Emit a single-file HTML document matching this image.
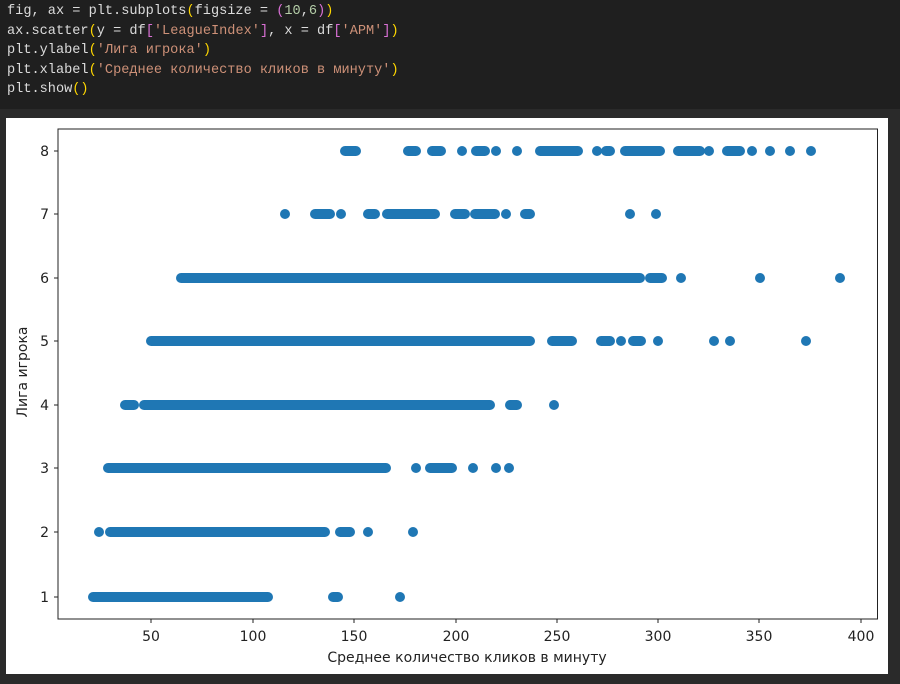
<!DOCTYPE html>
<html><head><style>
body{margin:0;width:900px;height:684px;background:#1f1f1f;overflow:hidden;font-family:"Liberation Mono",monospace}
.code{position:absolute;left:7px;top:2px;font-size:13.6px;line-height:19.5px;color:#dcdcdc;white-space:pre}
.y{color:#ffd700}.p{color:#da70d6}.s{color:#ce9178}.n{color:#b5cea8}
.out{position:absolute;left:0;top:109px;width:900px;height:575px;background:#2a2a2a}
svg{position:absolute;left:0;top:0}
</style></head><body>
<div class="code">fig, ax = plt.subplots<span class="y">(</span>figsize = <span class="p">(</span><span class="n">10</span>,<span class="n">6</span><span class="p">)</span><span class="y">)</span>
ax.scatter<span class="y">(</span>y = df<span class="p">[</span><span class="s">'LeagueIndex'</span><span class="p">]</span>, x = df<span class="p">[</span><span class="s">'APM'</span><span class="p">]</span><span class="y">)</span>
plt.ylabel<span class="y">(</span><span class="s">'Лига игрока'</span><span class="y">)</span>
plt.xlabel<span class="y">(</span><span class="s">'Среднее количество кликов в минуту'</span><span class="y">)</span>
plt.show<span class="y">()</span></div>
<div class="out"></div>
<svg width="900" height="684" xmlns="http://www.w3.org/2000/svg" font-family="'DejaVu Sans',sans-serif">
<rect x="6" y="118" width="882" height="556" fill="#fff"/>
<rect x="58" y="129" width="819.5" height="490" fill="none" stroke="#222" stroke-width="1"/>
<g stroke="#222" stroke-width="1">
<line x1="54" x2="58" y1="151" y2="151"/><line x1="54" x2="58" y1="214" y2="214"/><line x1="54" x2="58" y1="278" y2="278"/><line x1="54" x2="58" y1="341" y2="341"/><line x1="54" x2="58" y1="405" y2="405"/><line x1="54" x2="58" y1="468" y2="468"/><line x1="54" x2="58" y1="532" y2="532"/><line x1="54" x2="58" y1="597" y2="597"/>
<line y1="619" y2="623" x1="151" x2="151"/><line y1="619" y2="623" x1="253" x2="253"/><line y1="619" y2="623" x1="354" x2="354"/><line y1="619" y2="623" x1="456" x2="456"/><line y1="619" y2="623" x1="557" x2="557"/><line y1="619" y2="623" x1="658" x2="658"/><line y1="619" y2="623" x1="759" x2="759"/><line y1="619" y2="623" x1="861" x2="861"/>
</g>
<g font-size="14" fill="#222" text-anchor="end">
<text x="49" y="156">8</text><text x="49" y="219">7</text><text x="49" y="283">6</text><text x="49" y="346">5</text><text x="49" y="410">4</text><text x="49" y="473">3</text><text x="49" y="537">2</text><text x="49" y="602">1</text>
</g>
<g font-size="14" fill="#222" text-anchor="middle">
<text x="151" y="641">50</text><text x="253" y="641">100</text><text x="354" y="641">150</text><text x="456" y="641">200</text><text x="557" y="641">250</text><text x="658" y="641">300</text><text x="759" y="641">350</text><text x="861" y="641">400</text>
<text x="467" y="662">Среднее количество кликов в минуту</text>
<text transform="translate(27,372) rotate(-90)">Лига игрока</text>
</g>
<g stroke="#1f77b4" stroke-width="10" stroke-linecap="round">
<line x1="345" x2="356" y1="151" y2="151"/><line x1="408" x2="416" y1="151" y2="151"/><line x1="432" x2="441" y1="151" y2="151"/><line x1="462" x2="462" y1="151" y2="151"/><line x1="476" x2="485" y1="151" y2="151"/><line x1="496" x2="496" y1="151" y2="151"/><line x1="517" x2="517" y1="151" y2="151"/><line x1="540" x2="578" y1="151" y2="151"/><line x1="597" x2="597" y1="151" y2="151"/><line x1="606" x2="610" y1="151" y2="151"/><line x1="625" x2="660" y1="151" y2="151"/><line x1="678" x2="700" y1="151" y2="151"/><line x1="709" x2="709" y1="151" y2="151"/><line x1="727" x2="740" y1="151" y2="151"/><line x1="752" x2="752" y1="151" y2="151"/><line x1="770" x2="770" y1="151" y2="151"/><line x1="790" x2="790" y1="151" y2="151"/><line x1="811" x2="811" y1="151" y2="151"/>
<line x1="285" x2="285" y1="214" y2="214"/><line x1="315" x2="330" y1="214" y2="214"/><line x1="341" x2="341" y1="214" y2="214"/><line x1="368" x2="375" y1="214" y2="214"/><line x1="387" x2="435" y1="214" y2="214"/><line x1="455" x2="465" y1="214" y2="214"/><line x1="475" x2="495" y1="214" y2="214"/><line x1="506" x2="506" y1="214" y2="214"/><line x1="525" x2="530" y1="214" y2="214"/><line x1="630" x2="630" y1="214" y2="214"/><line x1="656" x2="656" y1="214" y2="214"/>
<line x1="181" x2="640" y1="278" y2="278"/><line x1="650" x2="662" y1="278" y2="278"/><line x1="681" x2="681" y1="278" y2="278"/><line x1="760" x2="760" y1="278" y2="278"/><line x1="840" x2="840" y1="278" y2="278"/>
<line x1="151" x2="530" y1="341" y2="341"/><line x1="552" x2="572" y1="341" y2="341"/><line x1="601" x2="610" y1="341" y2="341"/><line x1="621" x2="621" y1="341" y2="341"/><line x1="633" x2="641" y1="341" y2="341"/><line x1="658" x2="658" y1="341" y2="341"/><line x1="714" x2="714" y1="341" y2="341"/><line x1="730" x2="730" y1="341" y2="341"/><line x1="806" x2="806" y1="341" y2="341"/>
<line x1="125" x2="134" y1="405" y2="405"/><line x1="144" x2="490" y1="405" y2="405"/><line x1="510" x2="517" y1="405" y2="405"/><line x1="554" x2="554" y1="405" y2="405"/>
<line x1="108" x2="386" y1="468" y2="468"/><line x1="416" x2="416" y1="468" y2="468"/><line x1="430" x2="452" y1="468" y2="468"/><line x1="473" x2="473" y1="468" y2="468"/><line x1="496" x2="496" y1="468" y2="468"/><line x1="509" x2="509" y1="468" y2="468"/>
<line x1="99" x2="99" y1="532" y2="532"/><line x1="110" x2="325" y1="532" y2="532"/><line x1="340" x2="350" y1="532" y2="532"/><line x1="368" x2="368" y1="532" y2="532"/><line x1="413" x2="413" y1="532" y2="532"/>
<line x1="93" x2="268" y1="597" y2="597"/><line x1="333" x2="338" y1="597" y2="597"/><line x1="400" x2="400" y1="597" y2="597"/>
</g>
</svg>
</body></html>
